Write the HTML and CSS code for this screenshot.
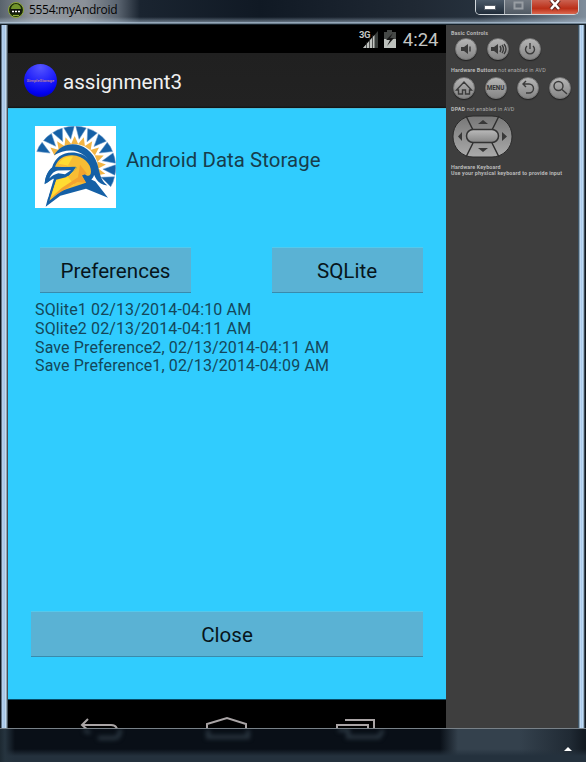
FILE: index.html
```html
<!DOCTYPE html>
<html lang="en">
<head>
<meta charset="utf-8">
<title>5554:myAndroid</title>
<link rel="stylesheet" href="styles.css">
</head>
<body>
<header class="titlebar">
  <svg class="app-icon" width="16" height="16" viewBox="0 0 16 16"><circle cx="8" cy="8" r="7.5" fill="#1c2d09" stroke="#91ac3a"/><path d="M3 7a5 5 0 0 1 10 0z" fill="#71942b"/><rect x="2.5" y="7" width="11" height="4.5" fill="#10140d"/><path d="M4 9.5h2m1 0h2m1 0h2" stroke="#fff" stroke-width="1.5"/><path d="M5 13.5h6" stroke="#91ac3a"/></svg>
  <span class="window-title">5554:myAndroid</span>
  <div class="window-buttons">
    <span class="win min"><svg width="12" height="5"><rect x=".5" y=".5" width="11" height="4" fill="#fff" stroke="#59616c"/></svg></span>
    <span class="win max"><svg width="11" height="9"><rect x="1.5" y="1.5" width="8" height="6" fill="none" stroke="#989da3" stroke-width="2"/></svg></span>
    <span class="win close"><svg width="14" height="12"><path d="M3 1l8 9m0-9l-8 9" stroke="#5d2925" stroke-width="4.5"/><path d="M3 1l8 9m0-9l-8 9" stroke="#fff" stroke-width="2.5"/></svg></span>
  </div>
</header>
<div class="window">
  <main class="phone">
    <div class="status">
      <svg width="62" height="29" viewBox="0 0 62 29"><path d="M20 7v17H5z" fill="#383c3a"/><path d="M16.500 11v13H5z" fill="#c0c3c0"/><path d="M8.500 18v6m3-10v10m3-13v13" stroke="#222" stroke-width=".7"/><path d="M29 6h5v2h4v16H26V8h3z" fill="#454846"/><path d="M26 15h12v9H26z" fill="#bcc0bc"/><path d="M35 9l-7 7h4l-3 6 7-8h-4z" fill="#151515"/></svg>
      <span class="network">3G</span>
      <span class="clock">4:24</span>
    </div>
    <div class="action-bar"><span class="ball">SimpleStorage</span><span class="app-name">assignment3</span></div>
    <div class="content">
      <div class="hero">
        <svg class="logo" width="81" height="82" viewBox="46 33 243 247" preserveAspectRatio="none">
          <defs>
            <path id="plume" d="M149 35q16-3 32 0l-16 37z" fill="#1560a6" stroke="#6d9dcc" stroke-width="1.500"/>
            <path id="ray" d="M154 88l11-25 11 25z" fill="#f2b544"/>
          </defs>
          <path fill="#fff" d="M46 33h243v247H46z"/>
          <use href="#plume" transform="rotate(-60 165 157)"/><use href="#plume" transform="rotate(-42 165 157)"/><use href="#plume" transform="rotate(-25 165 157)"/><use href="#plume" transform="rotate(-8 165 157)"/><use href="#plume" transform="rotate(9 165 157)"/><use href="#plume" transform="rotate(26 165 157)"/><use href="#plume" transform="rotate(43 165 157)"/><use href="#plume" transform="rotate(60 165 157)"/><use href="#plume" transform="rotate(77 165 157)"/><use href="#plume" transform="rotate(94 165 157)"/><use href="#plume" transform="rotate(111 165 157)"/>
          <use href="#ray" transform="rotate(-51 165 157)"/><use href="#ray" transform="rotate(-34 165 157)"/><use href="#ray" transform="rotate(-17 165 157)"/><use href="#ray" transform="rotate(0 165 157)"/><use href="#ray" transform="rotate(17 165 157)"/><use href="#ray" transform="rotate(34 165 157)"/><use href="#ray" transform="rotate(51 165 157)"/><use href="#ray" transform="rotate(68 165 157)"/><use href="#ray" transform="rotate(85 165 157)"/><use href="#ray" transform="rotate(102 165 157)"/>
          <path fill="#1560a6" d="M103 121c30-52 107-42 130 26 8 29 8 48 30 65-31-3-40-27-45-50-13-54-66-70-115-41z"/>
          <path fill="#1560a6" d="M75 210c1-22 8-40 22-52 10-30 30-44 60-45 39 0 65 27 67 56 1 12-3 20-9 25l12 6 38 49-66-27-77 21-44 33 24-93z"/>
          <path fill="#f8bd34" d="M106 156c10-26 29-36 52-35 34 2 56 26 56 49 0 16-12 16-20 6l-7 6 12 22-75 25-35 29 21-66 37-9 25-25z"/>
          <path fill="#ffdc32" d="M117 147c9-16 23-23 43-22l-17 30h26l-23 32 18 23-40 15-31 27 17-56 38-10 23-29z"/>
          <path fill="#f3a32e" d="M181 150l21 27-17 5 14 22-26-2-81 49 35-32 48-32z"/>
          <path fill="#1560a6" d="M99 157l70-1-9 13-22 18-29 8-24 71 18-76-28 20c1-22 8-41 24-53z"/>
          <path fill="#fff" d="M89 191c6-15 15-22 27-24l38-1-18 12-20-3c-12 3-20 8-27 16z"/>
          <path fill="#fff" d="M83 205l20-14-18 59-26 30H46v-60z"/>
        </svg>
        <h1>Android Data Storage</h1>
      </div>
      <div class="actions"><button>Preferences</button><button>SQLite</button></div>
      <div class="log"><p>SQlite1 02/13/2014-04:10 AM</p><p>SQlite2 02/13/2014-04:11 AM</p><p>Save Preference2, 02/13/2014-04:11 AM</p><p>Save Preference1, 02/13/2014-04:09 AM</p></div>
      <button class="close-app">Close</button>
    </div>
    <svg class="nav" width="438" height="29" viewBox="0 0 438 29"><g fill="none" stroke="#aaa5a6" stroke-width="2"><path d="M80 19l-6 6 7 6M74 25h29q5 0 6 4M199 29v-5l20-6 19 6v5"/><path d="M329 30v-5h31v5M337 20h29v10"/></g></svg>
  </main>
  <aside class="panel">
    <h2>Basic Controls</h2>
    <div class="row basic">
      <span class="key"><svg viewBox="0 0 22 22"><path d="M6 9h3l4-3v10l-4-3H6z"/><path class="line" d="M15 8.500v5"/></svg></span>
      <span class="key"><svg viewBox="0 0 22 22"><path d="M4 9h3l4-3v10l-4-3H4z"/><path class="line" d="M13 8q2 3 0 6M15 7q3 4 0 8M17 6q4 5 0 10"/></svg></span>
      <span class="key"><svg viewBox="0 0 22 22"><path class="line" d="M8 8a4.500 4.500 0 1 0 6 0M11 5v6"/></svg></span>
    </div>
    <h2>Hardware Buttons <span>not enabled in AVD</span></h2>
    <div class="row hardware">
      <span class="key"><svg viewBox="0 0 22 22"><path class="line" d="M5.500 17v-4h-2L11 5l7.500 8h-2v4h-4v-4h-3v4z"/></svg></span>
      <span class="key">MENU</span>
      <span class="key"><svg viewBox="0 0 22 22"><path class="line" d="M9 4L6 7l3 3M6 7h6a4.500 4.500 0 0 1 0 9H9"/></svg></span>
      <span class="key"><svg viewBox="0 0 22 22"><circle class="line" cx="9.500" cy="9" r="4.500"/><path class="line" d="M13 12.500l5 4.500"/></svg></span>
    </div>
    <h2 class="dpad-title">DPAD <span>not enabled in AVD</span></h2>
    <svg class="dpad" width="62" height="43" viewBox="0 0 62 43">
      <defs><linearGradient id="metal" x2="0" y2="1"><stop stop-color="#777"/><stop offset="1" stop-color="#aaa"/></linearGradient><linearGradient id="pill" x2="0" y2="1"><stop stop-color="#bbb"/><stop offset="1" stop-color="#858585"/></linearGradient></defs>
      <rect x="1" y="1" width="59" height="41" rx="20" fill="url(#metal)" stroke="#292929"/>
      <path d="M14 1l7 14M47 1l-7 14M14 42l7-14M47 42l-7-14" stroke="#303030" stroke-width="1.500"/>
      <rect x="14.500" y="14.500" width="32" height="13" rx="6.500" fill="url(#pill)" stroke="#333" stroke-width="1.500"/>
      <path d="M26 9l5-4 5 4zM26 33h10l-5 4zM10 17v9l-4-4.500zM50 17v9l5-4.500z" fill="#383838"/>
    </svg>
    <h2 class="keyboard">Hardware Keyboard<br>Use your physical keyboard to provide input</h2>
  </aside>
</div>
<footer class="taskbar">
  <svg width="446" height="33" viewBox="0 0 446 33"><g fill="none" stroke="#29353f" stroke-width="4" class="glow"><path d="M84 1l6 3M98 9h17q5 0 5-9M208 1v7h40V1M338 1h10v7h31l4-7"/></g></svg>
  <span class="tray"></span>
</footer>
</body>
</html>
```
FILE: styles.css
```css
* { box-sizing: border-box; }
body { margin: 0; width: 586px; height: 762px; overflow: hidden; display: flex; flex-direction: column; background: #11161c; font-family: Roboto, sans-serif; }
h1, h2, p { margin: 0; font-weight: 400; }
.titlebar { height: 24px; flex: none; display: flex; align-items: flex-start; padding: 2px 8px 0; background: linear-gradient(transparent 17px, #aabdcf88 22px, #c5dcf1 23px, #17232c 24px), linear-gradient(90deg, #59636c, #9499a0 35px, #8b9198 85px, #5a6470 118px, #1a2430 140px, #101924 260px, #202934 420px, #26313d 480px, #7f8d9b 586px); }
.app-icon { flex: none; }
.window-title { margin: 0 0 0 5px; font: 12px/15px "Open Sans", sans-serif; letter-spacing: -.3px; color: #050505; }
.window-buttons { display: flex; width: 104px; height: 15px; margin: -2px -1px 0 auto; border: 1px solid #d2d8dc; border-top: 0; border-radius: 0 0 5px 5px; background: #414c59; overflow: hidden; }
.win { display: flex; justify-content: center; align-items: center; }
.min { width: 29px; padding-top: 0; border-right: 1px solid #aab0b6; background: linear-gradient(#4b5968, #202c39); }
.max { width: 27px; padding-bottom: 4px; border-right: 1px solid #aab0b6; background: linear-gradient(#737a83, #515a64); }
.close { flex: 1; padding-bottom: 4px; background: linear-gradient(#cb6251, #bb2f18 60%, #db6950); }
.window { height: 704px; flex: none; display: flex; padding: 0 8px; border-top: 1px solid #162129; background: linear-gradient(90deg, #101820 1px, #b6d1ee 2px, #a5c4e5 5px, #dff2ff 6px, #45515c 7px, #45515c 8px, transparent 8px), linear-gradient(270deg, #101820 1px, #c5e2fb 3px, #a4c4e7 5px, #d8edff 6px, #3e5465 7px); }
.phone { width: 437.5px; flex: none; display: flex; flex-direction: column; overflow: hidden; }
.status { height: 28px; flex: none; background: #000; display: flex; justify-content: flex-end; padding-right: 7px; position: relative; color: #c3c5c3; }
.status svg { width: 62px; height: 29px; margin-top: -1px; margin-right: -17px; }
.network { position: absolute; left: 351px; top: 4px; font: bold 9.5px/11px Roboto, sans-serif; letter-spacing: -.5px; }
.clock { font-size: 18.5px; line-height: 30px; }
.action-bar { height: 55px; flex: none; display: flex; align-items: center; padding: 0 16px; background: linear-gradient(#202020, #222 96%, #101315); color: #f0f0f0; }
.ball { width: 33px; height: 33px; border-radius: 50%; background: radial-gradient(circle at 50% 10%, #5555ff, #2222fa 45%, #0000ef 78%, #101064); display: flex; justify-content: center; align-items: center; color: #c18894; font-size: 4.2px; font-weight: 500; }
.app-name { margin: 3px 0 0 6px; font-size: 20.6px; }
.content { height: 592px; flex: none; background: #30ccfe; padding: 17px 23px 0 27px; border-top: 1px solid #43bddd; border-bottom: 1px solid #064c67; }
.hero { display: flex; height: 121px; }
.logo { flex: none; }
h1 { margin: 21px 0 0 10px; font-size: 20.4px; line-height: 26px; letter-spacing: .07px; color: #173d4c; white-space: nowrap; }
.actions { display: flex; justify-content: space-between; padding-left: 5px; }
button { width: 151px; height: 46px; padding: 3px 0 0; border: 0; border-top: 1px solid #55c9ec; border-bottom: 1px solid #388bad; background: #5ab2d4; color: #07151b; font: 20.6px/41px Roboto, sans-serif; }
.log { margin-top: 8px; font-size: 16px; line-height: 18.8px; letter-spacing: .13px; color: #14475a; white-space: nowrap; }
.close-app { display: block; margin: 235px 0 0 -4px; width: 392px; }
.nav { display: block; flex: none; background: #000; }
.panel { flex: 1; background: #3e3e3e; padding: 5px 5.5px; color: #b8b8b8; }
h2 { font-size: 5.4px; line-height: 7px; font-weight: 700; letter-spacing: .13px; white-space: nowrap; }
h2 span { font-weight: 400; color: #aaa; }
.row { display: flex; }
.basic { gap: 10px; padding-left: 3.5px; margin: 1px 0 7px; }
.hardware { gap: 10px; padding-left: 1.5px; margin: 3px 0 0; }
.key { width: 22px; height: 22px; flex: none; border-radius: 50%; border: 1px solid #777; background: linear-gradient(#b5b5b5, #858585); box-shadow: 0 1px 1px #222; display: flex; align-items: center; justify-content: center; color: #333; font-size: 6.3px; font-weight: 700; }
.key svg { width: 22px; height: 22px; flex: none; fill: #3b3b3b; }
.key .line { fill: none; stroke: #3b3b3b; stroke-width: 1.4; }
.dpad-title { margin-top: 7px; }
.dpad { display: block; margin: 2px 0 0 1px; }
.keyboard { margin-top: 6px; line-height: 6px; }
.taskbar { height: 34px; flex: none; border-top: 1px solid #788188; display: flex; background: linear-gradient(90deg, #1d2932, #26343f 5px, transparent 15px), linear-gradient(transparent 20px, #24313d 27px), linear-gradient(90deg, #090f17 440px, #34414d 458px, #34414d 520px, #202a34 570px, #111820); }
.glow { filter: blur(2px); }
.tray { width: 0; height: 0; border: 4px solid transparent; border-bottom-color: #fff; border-top: 0; margin: 18px 0 0 118px; }
```
